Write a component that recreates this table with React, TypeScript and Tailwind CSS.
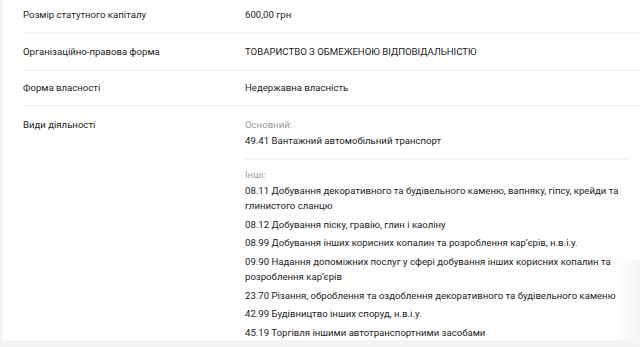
import React from 'react';

type Row = { label: string; value: React.ReactNode };

const others = [
    '08.11 Добування декоративного та будівельного каменю, вапняку, гіпсу, крейди та глинистого сланцю',
    '08.12 Добування піску, гравію, глин і каоліну',
    '08.99 Добування інших корисних копалин та розроблення кар\u2019єрів, н.в.і.у.',
    '09.90 Надання допоміжних послуг у сфері добування інших корисних копалин та розроблення кар\u2019єрів',
    '23.70 Різання, оброблення та оздоблення декоративного та будівельного каменю',
    '42.99 Будівництво інших споруд, н.в.і.у.',
    '45.19 Торгівля іншими автотранспортними засобами',
];

const rows: Row[] = [
    { label: 'Розмір статутного капіталу', value: '600,00 грн' },
    {
        label: 'Організаційно-правова форма',
        value: 'ТОВАРИСТВО З ОБМЕЖЕНОЮ ВІДПОВІДАЛЬНІСТЮ',
    },
    { label: 'Форма власності', value: 'Недержавна власність' },
];

export default function App() {
    return (
        <div
            className="relative flex h-[347px] w-[640px] flex-col overflow-hidden border-l-[3px] border-[#f4f4f4] bg-white text-[9.6px] text-[#222]"
            style={{ fontFamily: 'Roboto, "Liberation Sans", sans-serif' }}
        >
            <div className="flex-1 pl-[20px]">
                {rows.map((row, i) => (
                    <div
                        key={row.label}
                        className={
                            i === 0
                                ? 'grid grid-cols-[222px_1fr] border-b-2 border-[#f2f2f2] pt-[7px] pb-[9px] leading-[16px]'
                                : 'grid grid-cols-[222px_1fr] border-b-2 border-[#f2f2f2] pt-[9.5px] pb-[9px] leading-[16px]'
                        }
                    >
                        <div>{row.label}</div>
                        <div>{row.value}</div>
                    </div>
                ))}

                <div className="grid grid-cols-[222px_385px] pt-[10px] leading-[15.5px]">
                    <div className="leading-[16px]">Види діяльності</div>
                    <div>
                        <div className="text-[#9a9a9a]">Основний:</div>
                        <div>49.41 Вантажний автомобільний транспорт</div>
                        <div className="mt-[10px] mb-[7px] border-t-2 border-[#f2f2f2]" />
                        <div className="text-[#9a9a9a]">Інші:</div>
                        <div className="flex flex-col gap-[3px]">
                            {others.map((item) => (
                                <div key={item}>{item}</div>
                            ))}
                        </div>
                    </div>
                </div>
            </div>
            <div className="h-[7px] shrink-0 bg-[#f4f4f4]" />
            <div className="pointer-events-none absolute right-0 bottom-[7px] h-[80px] w-[24px] bg-gradient-to-l from-[#f3f3f3] to-transparent" />
        </div>
    );
}
